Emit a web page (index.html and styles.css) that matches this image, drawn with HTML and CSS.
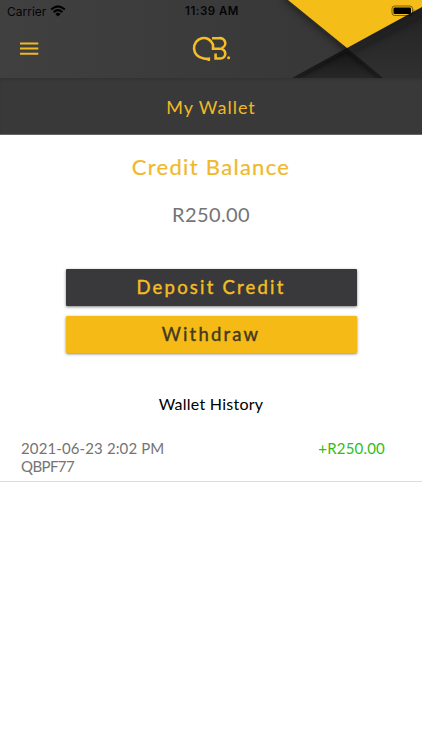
FILE: index.html
```html
<!DOCTYPE html>
<html lang="en">
<head>
<meta charset="utf-8">
<title>My Wallet</title>
<link rel="stylesheet" href="styles.css">
</head>
<body>
<header class="top">
  <svg class="backdrop" viewBox="0 0 422 78" aria-hidden="true">
    <defs>
      <linearGradient id="base" x1="0" y1="0" x2="1" y2="0"><stop offset="0" stop-color="#404041"/><stop offset=".8" stop-color="#373738"/><stop offset="1" stop-color="#303031"/></linearGradient>
      <linearGradient id="right" x1="0" y1="0" x2="0" y2="1"><stop offset="0" stop-color="#232324"/><stop offset="1" stop-color="#303031"/></linearGradient>
      <linearGradient id="low" x1="0" y1="0" x2="0" y2="1"><stop offset="0" stop-color="#151515"/><stop offset="1" stop-color="#272727"/></linearGradient>
      <filter id="soft" x="-20%" y="-20%" width="140%" height="140%"><feGaussianBlur stdDeviation="5"/></filter>
      <filter id="edge" x="-20%" y="-20%" width="140%" height="140%"><feGaussianBlur stdDeviation="2.5"/></filter>
      <clipPath id="fold"><path d="M347 48L292 78H383z"/></clipPath>
    </defs>
    <path fill="url(#base)" d="M0 0h422v78H0z"/>
    <path fill="#111" opacity=".6" filter="url(#soft)" d="M286 0L347 50L424 9V-10H286z"/>
    <path fill="url(#right)" d="M347 48L422 7V78H383z"/>
    <path fill="#111" opacity=".5" filter="url(#soft)" d="M344 46L424 3V14L349 53z"/>
    <path fill="url(#low)" d="M347 48L292 78H383z"/>
    <path fill="none" stroke="#0a0a0a" stroke-width="5" opacity=".7" filter="url(#edge)" clip-path="url(#fold)" d="M292 78L347 48L383 78"/>
    <path fill="#f4bd18" d="M288 0H422V7L347 48z"/>
  </svg>
  <div class="status">
    <div class="carrier"><span>Carrier</span>
      <svg width="16" height="12" viewBox="0 0 16 12"><g fill="none" stroke="#000" stroke-width="2"><path d="M1.2 4.6Q8-1.8 14.8 4.6"/><path d="M3.6 7.2Q8 3 12.4 7.2"/></g><path d="M5.4 8.9Q8 6.8 10.6 8.9L8 11.5z"/></svg>
    </div>
    <span class="clock">11:39 AM</span>
    <svg class="battery" width="24" height="12" viewBox="0 0 24 12"><rect x="1" y="1" width="20.5" height="9.5" rx="2.6" fill="none" stroke="#000" stroke-opacity=".5"/><rect x="2.5" y="2.5" width="17.5" height="6.5" rx="1.3"/><path d="M22.5 4v3.5q1-.6 1-1.75t-1-1.75" opacity=".5"/></svg>
  </div>
  <div class="nav">
    <svg class="menu" width="19" height="14" viewBox="0 0 19 14"><path fill="#f0b923" d="M0 .4h18.3v2H0zM0 5.6h18.3v2H0zM0 10.8h18.3v2H0z"/></svg>
    <svg class="logo" width="40" height="26" viewBox="191 36 40 26"><g fill="none" stroke="#f5bd25" stroke-width="2.6"><path d="M208.8 61V58.8Q206 59.2 203 58.2A9.8 10.1 0 1 1 213 44.5V48.7H220.4A4.9 4.9 0 0 1 220.4 58.5H215.6V53.5"/><path d="M212 38.3H219A5 5 0 0 1 221.5 48"/></g><circle cx="228.6" cy="57.7" r="1.5" fill="#f5bd25"/></svg>
  </div>
</header>
<h1 class="title"><span>My Wallet</span></h1>
<main>
  <h2 class="balance-label"><span>Credit Balance</span></h2>
  <p class="balance"><span>R250.00</span></p>
  <div class="actions">
    <button class="deposit"><span>Deposit Credit</span></button>
    <button class="withdraw"><span>Withdraw</span></button>
  </div>
  <h3 class="history-title"><span>Wallet History</span></h3>
  <div class="entry">
    <div class="detail"><span class="date">2021-06-23 2:02 PM</span><span class="code">QBPF77</span></div>
    <span class="amount">+R250.00</span>
  </div>
</main>
</body>
</html>
```
FILE: styles.css
```css
* { box-sizing: border-box; }
body { margin: 0; height: 750px; background: #fff; font-family: Lato, "Liberation Sans", sans-serif; overflow: hidden; }
h1, h2, h3, p { margin: 0; font-weight: 400; text-align: center; }
.top { position: relative; height: 78px; background: #39393a; }
.backdrop { position: absolute; inset: 0; width: 422px; height: 78px; }
.status { position: relative; height: 22px; display: grid; grid-template-columns: 1fr auto 1fr; align-items: center; padding: 0 7px; font-family: Inter, sans-serif; font-size: 12px; color: #050505; }
.carrier { display: flex; align-items: center; gap: 4px; }
.clock { font-weight: 600; font-size: 11.5px; letter-spacing: .5px; margin-right: -2px; }
.battery { justify-self: end; }
.nav { position: relative; height: 56px; display: grid; grid-template-columns: 1fr auto 1fr; padding: 14px 20px 0; }
.menu { margin-top: 6px; }
.title { height: 57px; line-height: 58px; background: #39393a; border-bottom: 1px solid #666; box-shadow: inset 0 3px 3px -2px #303030; color: #f0b923; font-size: 18px; letter-spacing: 1px; }
main { display: flex; flex-direction: column; }
.balance-label { margin-top: 16px; height: 32px; line-height: 32px; color: #f0b82b; font-size: 22px; letter-spacing: 1.3px; -webkit-text-stroke: .2px; }
.balance { margin-top: 18px; height: 26px; line-height: 26px; color: #747474; font-size: 20px; letter-spacing: .4px; }
.actions { margin: 42px 65.5px 0; display: grid; gap: 10px; }
button { height: 37px; padding: 0; border: 0; border-radius: 1px; font: 400 18.5px/37px Lato, sans-serif; letter-spacing: 2.2px; -webkit-text-stroke: .4px; box-shadow: 0 1px 3px rgba(0,0,0,.5); }
.deposit { background: #39393b; color: #f4bd24; }
.withdraw { background: #f6ba17; color: #413b20; }
.history-title { margin-top: 39px; height: 24px; line-height: 24px; font-size: 16px; letter-spacing: .25px; color: #000; }
.entry { margin-top: 20px; height: 46px; padding: 3px 37px 0 21px; display: flex; justify-content: space-between; border-bottom: 1px solid #ddd; color: #747474; font-size: 15px; line-height: 18px; }
.detail { display: flex; flex-direction: column; align-items: flex-start; }
.date { letter-spacing: .12px; }
.code { letter-spacing: -.6px; }
.amount { color: #31bd1c; letter-spacing: .2px; }
```
